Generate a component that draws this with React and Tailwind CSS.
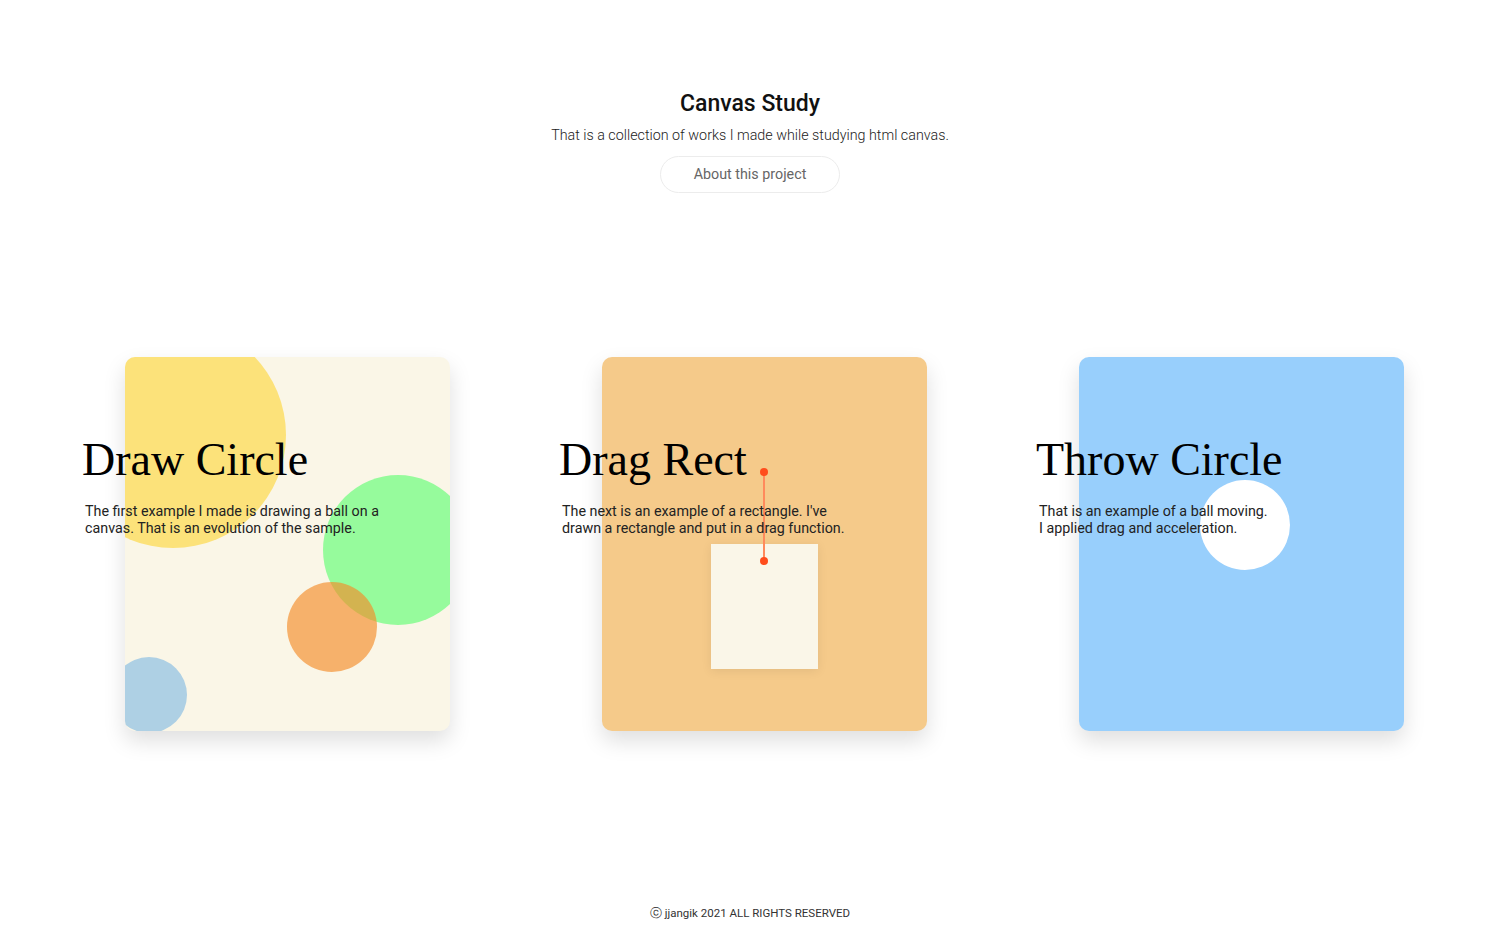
import React from 'react';

const sans = { fontFamily: 'Roboto, "Liberation Sans", sans-serif' };
const serif = { fontFamily: '"Liberation Serif", "DejaVu Serif", serif' };

// canvas drawings for each card
function CircleCanvas() {
  return (
    <svg className="absolute inset-0" width="325" height="374" viewBox="0 0 325 374">
      <circle cx="48" cy="78" r="113" fill="#fce27a" />
      <circle cx="273" cy="193" r="75" fill="#96fb9c" />
      <circle cx="207" cy="270" r="45" fill="rgba(245,140,40,0.65)" />
      <circle cx="24" cy="338" r="38" fill="#aed0e4" />
    </svg>
  );
}

function RectCanvas() {
  return (
    <>
      <div className="absolute left-[109px] top-[187px] w-[107px] h-[125px] bg-[#faf6e8] shadow-[0_2px_10px_rgba(0,0,0,0.08)]" />
      <svg className="absolute inset-0" width="325" height="374" viewBox="0 0 325 374">
        <line x1="162" y1="115" x2="162" y2="204" stroke="#ff8a5c" strokeWidth="2" />
        <circle cx="162" cy="115" r="4" fill="#ff4d1c" />
        <circle cx="162" cy="204" r="4" fill="#ff4d1c" />
      </svg>
    </>
  );
}

function ThrowCanvas() {
  return (
    <svg className="absolute inset-0" width="325" height="374" viewBox="0 0 325 374">
      <circle cx="166" cy="168" r="45" fill="#ffffff" />
    </svg>
  );
}

const items = [
  {
    title: 'Draw Circle',
    lines: ['The first example I made is drawing a ball on a', 'canvas. That is an evolution of the sample.'],
    bg: 'bg-[#faf6e7]',
    Canvas: CircleCanvas,
  },
  {
    title: 'Drag Rect',
    lines: ["The next is an example of a rectangle. I've", 'drawn a rectangle and put in a drag function.'],
    bg: 'bg-[#f5ca8a]',
    Canvas: RectCanvas,
  },
  {
    title: 'Throw Circle',
    lines: ['That is an example of a ball moving.', 'I applied drag and acceleration.'],
    bg: 'bg-[#98cffc]',
    Canvas: ThrowCanvas,
  },
];

function Card({ title, lines, bg, Canvas }) {
  return (
    <div className="relative w-[325px] h-[374px] shrink-0">
      <div className={`absolute inset-0 rounded-[10px] overflow-hidden ${bg} shadow-[0_10px_22px_rgba(0,0,0,0.13)]`}>
        <Canvas />
      </div>
      <div className="absolute left-[-40px] top-[80px] w-[340px]">
        <h2 className="-ml-[3px] text-[46px] leading-[46px] text-black whitespace-nowrap" style={serif}>
          {title}
        </h2>
        <p className="mt-[20px] text-[14.3px] leading-[17px] text-[#222] whitespace-nowrap" style={sans}>
          {lines[0]}
          <br />
          {lines[1]}
        </p>
      </div>
    </div>
  );
}

export default function App() {
  return (
    <div className="w-[1500px] h-[938px] bg-white flex flex-col overflow-hidden" style={sans}>
      {/* header */}
      <div className="flex flex-col items-center pt-[89px]">
        <h1 className="text-[23px] leading-[29px] font-medium text-[#111]">Canvas Study</h1>
        <p className="mt-[7px] text-[14.3px] leading-[20px] font-light text-[#222]">
          That is a collection of works I made while studying html canvas.
        </p>
        <button className="mt-[11px] w-[180px] h-[37px] rounded-full border border-[#ececec] text-[14.3px] text-[#666] bg-white">
          About this project
        </button>
      </div>

      {/* cards */}
      <div className="flex pl-[125px] gap-[152px] mt-[164px]">
        {items.map((it) => (
          <Card key={it.title} {...it} />
        ))}
      </div>

      {/* footer */}
      <div className="mt-[174px] text-center text-[11.5px] leading-[16px] text-[#333]">
        ⓒ jjangik 2021 ALL RIGHTS RESERVED
      </div>
    </div>
  );
}
